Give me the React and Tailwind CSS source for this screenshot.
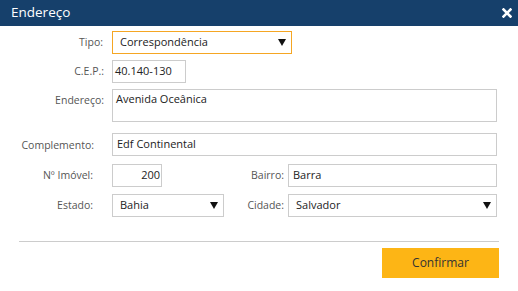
import React from 'react'

const font = { fontFamily: '"Open Sans", "Noto Sans", sans-serif' }

function Arrow() {
  return (
    <svg width="8" height="7" viewBox="0 0 8 7" className="shrink-0">
      <path d="M0 0 H8 L4 7 Z" fill="#111" />
    </svg>
  )
}

function Select({ value, className = '' }) {
  return (
    <div className={`flex items-center justify-between bg-white border pl-[7px] pr-[5px] text-[11px] text-[#222] ${className}`}>
      <span>{value}</span>
      <Arrow />
    </div>
  )
}

function Input({ value, className = '' }) {
  return (
    <div className={`flex items-center bg-white border border-[#cccccc] text-[11px] text-[#222] ${className}`}>
      {value}
    </div>
  )
}

function Label({ children, className = '' }) {
  return (
    <div className={`shrink-0 text-right text-[10.5px] text-[#555] ${className}`}>{children}</div>
  )
}

export default function App() {
  return (
    <div className="w-[518px] h-[291px] bg-white overflow-hidden" style={font}>
      {/* Header */}
      <div className="h-[26px] bg-[#16406b] flex items-center justify-between pl-[11px] pr-[6px]">
        <span className="text-white text-[13.5px] leading-none">Endereço</span>
        <svg width="10" height="10" viewBox="0 0 10 10">
          <path d="M1.5 1.5 L8.5 8.5 M8.5 1.5 L1.5 8.5" stroke="#fff" strokeWidth="2.6" strokeLinecap="square" />
        </svg>
      </div>

      <div className="flex flex-col pt-[5px]">
        {/* Tipo */}
        <div className="flex items-center h-[23px]">
          <Label className="w-[112px] pr-[9px]">Tipo:</Label>
          <Select value="Correspondência" className="w-[180px] h-[23px] border-[#f5a623]" />
        </div>

        {/* CEP */}
        <div className="flex items-center h-[23px] mt-[6px]">
          <Label className="w-[112px] pr-[8px]">C.E.P.:</Label>
          <Input value="40.140-130" className="w-[74px] h-[23px] pl-[2px]" />
        </div>

        {/* Endereço */}
        <div className="flex items-start mt-[6px]">
          <Label className="w-[112px] pr-[8px] pt-[4px]">Endereço:</Label>
          <div className="w-[385px] h-[33px] border border-[#cccccc] text-[11px] text-[#222] pl-[3px] pt-[1px] leading-[16px]">
            Avenida Oceânica
          </div>
        </div>

        {/* Complemento */}
        <div className="flex items-center h-[23px] mt-[11px]">
          <Label className="w-[112px] pr-[18px] pt-[3px]">Complemento:</Label>
          <Input value="Edf Continental" className="w-[385px] h-[23px] pl-[4px]" />
        </div>

        {/* Imóvel / Bairro */}
        <div className="flex items-center h-[23px] mt-[8px]">
          <Label className="w-[112px] pr-[19px]">Nº Imóvel:</Label>
          <Input value="200" className="w-[50px] h-[23px] justify-end pr-[1px]" />
          <Label className="w-[126px] pr-[4px]">Bairro:</Label>
          <Input value="Barra" className="w-[209px] h-[23px] pl-[4px]" />
        </div>

        {/* Estado / Cidade */}
        <div className="flex items-center h-[23px] mt-[7px]">
          <Label className="w-[112px] pr-[19px]">Estado:</Label>
          <Select value="Bahia" className="w-[112px] h-[23px] border-[#cccccc]" />
          <Label className="w-[64px] pr-[4px]">Cidade:</Label>
          <Select value="Salvador" className="w-[209px] h-[23px] border-[#cccccc] pl-[6px]" />
        </div>

        {/* Divider */}
        <div className="ml-[19px] w-[480px] h-px bg-[#cccccc] mt-[24px]" />

        {/* Footer */}
        <div className="flex justify-end pr-[19px] mt-[6px]">
          <button className="w-[117px] h-[30px] bg-[#fdb515] text-[#333] text-[12px]">Confirmar</button>
        </div>
      </div>
    </div>
  )
}
